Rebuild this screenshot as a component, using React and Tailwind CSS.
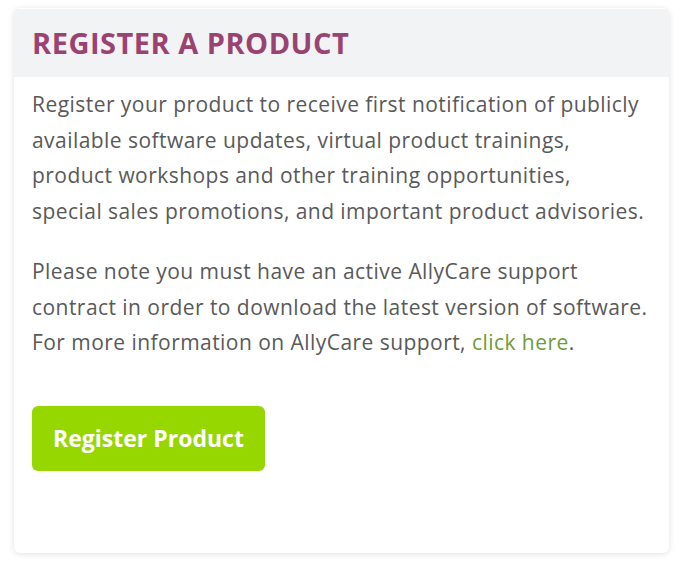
export default function App() {
  const font = { fontFamily: '"Open Sans", "Lato", sans-serif' };
  return (
    <div className="w-[686px] h-[571px] bg-white pt-[8px] pl-[14px]" style={font}>
      <div className="w-[655px] h-[545px] rounded-[6px] bg-white shadow-[0_1px_6px_rgba(0,0,0,0.12)] overflow-hidden flex flex-col">
        <div className="h-[69px] bg-[#f2f3f5] pl-[18px] pt-[16px] border-t border-white">
          <h1 className="text-[29px] leading-[36px] font-bold text-[#9a4373] tracking-[0.5px]">REGISTER A PRODUCT</h1>
        </div>
        <div className="pl-[18px] pt-[10px] text-[21px] leading-[35.7px] tracking-[0.45px] text-[#595959]">
          <p>
            <span className="block whitespace-nowrap">Register your product to receive first notification of publicly</span>
            <span className="block whitespace-nowrap">available software updates, virtual product trainings,</span>
            <span className="block whitespace-nowrap">product workshops and other training opportunities,</span>
            <span className="block whitespace-nowrap">special sales promotions, and important product advisories.</span>
          </p>
          <p className="mt-[24px]">
            <span className="block whitespace-nowrap">Please note you must have an active AllyCare support</span>
            <span className="block whitespace-nowrap">contract in order to download the latest version of software.</span>
            <span className="block whitespace-nowrap">For more information on AllyCare support, <a className="text-[#6d9b3a]">click here</a>.</span>
          </p>
          <button className="mt-[45px] w-[233px] h-[65px] rounded-[6px] bg-[#97d700] text-white font-bold text-[23px] tracking-normal flex items-center justify-center">
            Register Product
          </button>
        </div>
      </div>
    </div>
  );
}
